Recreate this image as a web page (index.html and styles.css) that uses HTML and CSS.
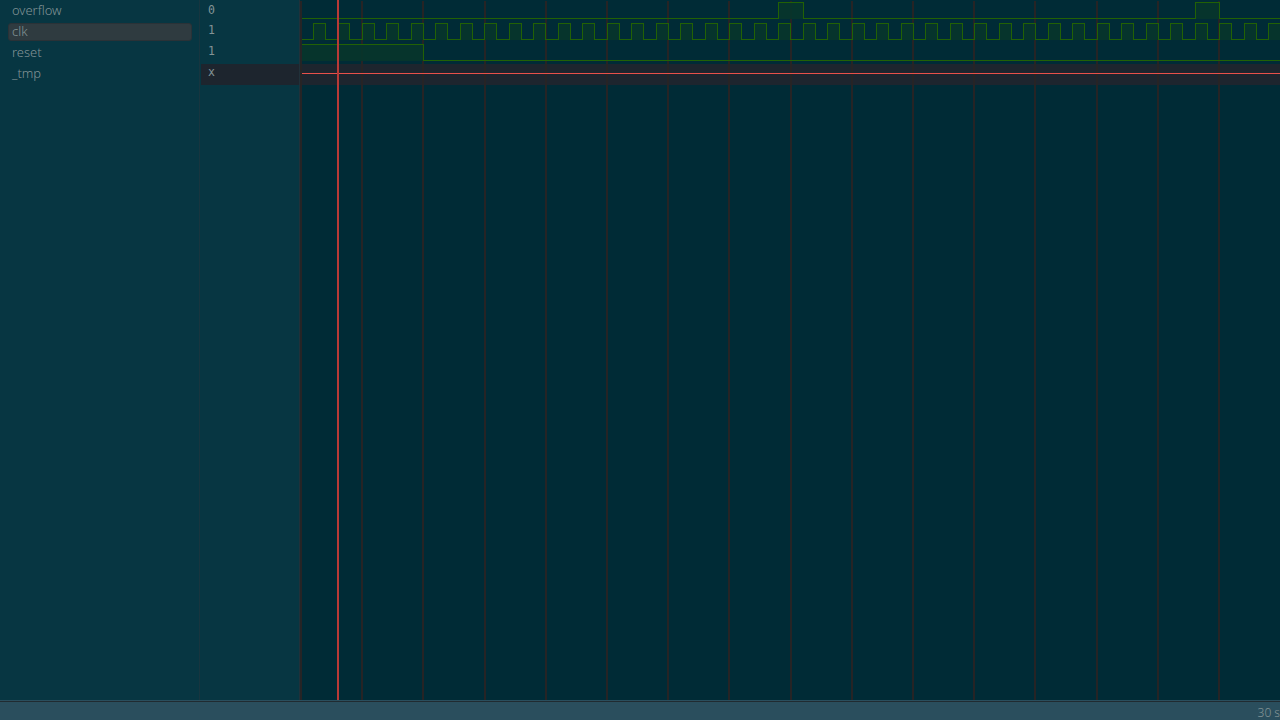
FILE: index.html
```html
<!DOCTYPE html>
<html lang="en"><head><meta charset="utf-8"><title>Waveform viewer</title>
<link rel="stylesheet" href="styles.css"></head>
<body>
<main class="viewer">
<section class="names"><div class="name"><span>overflow</span></div><div class="name selected"><span>clk</span></div><div class="name"><span>reset</span></div><div class="name"><span class="tmp">_tmp</span></div></section>
<section class="values"><div class="value">0</div><div class="value">1</div><div class="value">1</div><div class="value undefined">x</div></section>
<section class="plot"><svg id="waves" width="980" height="700" viewBox="300 0 980 700" shape-rendering="crispEdges"></svg></section>
</main>
<footer class="status"><span>30 s</span></footer>
<script src="waves.js"></script>
</body></html>
```
FILE: styles.css
```css
* { box-sizing: border-box; }
body { margin: 0; width: 1280px; height: 720px; overflow: hidden; display: flex; flex-direction: column; background: #002b36; color: #839496; font-family: "Noto Sans", sans-serif; }
.viewer { display: flex; height: 700px; }
.names { width: 200px; padding: 0 8px; background: #073642; border-right: 1px solid #17353f; font-size: 12.5px; font-weight: 300; }
.name { height: 21px; padding-left: 4px; line-height: 21px; }
.name span { display: inline-block; transform-origin: left; transform: scaleX(1.035); }
.selected { height: 18px; margin: 2px 0 1px; width: 184px; padding-left: 3px; line-height: 16px; background: #2f3b40; border: 1px solid #2a3237; border-radius: 3px; }
.values { width: 100px; background: #073642; padding-left: 1px; border-right: 1px solid #20313a; font: 11.5px "DejaVu Sans Mono", monospace; }
.value { height: 21px; padding-left: 7px; line-height: 20px; }
.value:nth-child(2), .value:nth-child(3) { line-height: 18px; }
.value.undefined { height: 21px; margin-top: 1px; line-height: 17px; background: #1d252e; }
.plot { width: 980px; }
.plot svg { display: block; }
.grid { stroke: #262425; stroke-width: 2; }
.trace { fill: none; stroke: #226105; stroke-width: 1; }
.high { fill: #07352b; }
.unknown { fill: #1d252e; }
.unknown-line { stroke: #e8504a; stroke-width: 1; }
.cursor { stroke: #b93a37; stroke-width: 2; }
.status { height: 20px; display: flex; justify-content: flex-end; background: #2a4e5d; border-top: 1px solid #2a4e5d; box-shadow: inset 0 1px #202b31; font-size: 12px; line-height: 23px; font-weight: 300; white-space: nowrap; }
```
FILE: waves.js
```js
const svg = document.getElementById('waves');
function add(tag, cls, attrs) {
  const node = document.createElementNS('http://www.w3.org/2000/svg', tag);
  node.setAttribute('class', cls);
  for (const key in attrs) node.setAttribute(key, attrs[key]);
  svg.appendChild(node);
}
const edge = n => Math.floor(300.9 + 12.2485 * n);
add('rect', 'unknown', {x: 300, y: 64, width: 980, height: 21});
for (let i = 0; i < 16; i++) {
  const x = Math.round(300.9 + 61.2 * i);
  add('path', 'grid', {d: `M${x} 1V700`});
}
function signal(highs, top, bottom) {
  let d = `M302 ${bottom + .5}`;
  for (const [a, b] of highs) {
    add('rect', 'high', {x: a, y: top, width: b - a, height: bottom - top + 1, 'fill-opacity': .9});
    d += a === 302 ? `M302 ${top + .5}` : `H${a + .5}V${top + .5}`;
    d += `H${b + .5}V${bottom + .5}`;
  }
  add('path', 'trace', {d: d + 'H1280'});
}
signal([[edge(39), edge(41)], [edge(73), edge(75)]], 2, 18);
const clock = [];
for (let n = 1; n < 80; n += 2) clock.push([edge(n), edge(n + 1)]);
signal(clock, 23, 39);
signal([[302, edge(10)]], 44, 60);
add('path', 'unknown-line', {d: 'M302 73.5H1280'});
add('path', 'cursor', {d: 'M338 0V700'});
```
